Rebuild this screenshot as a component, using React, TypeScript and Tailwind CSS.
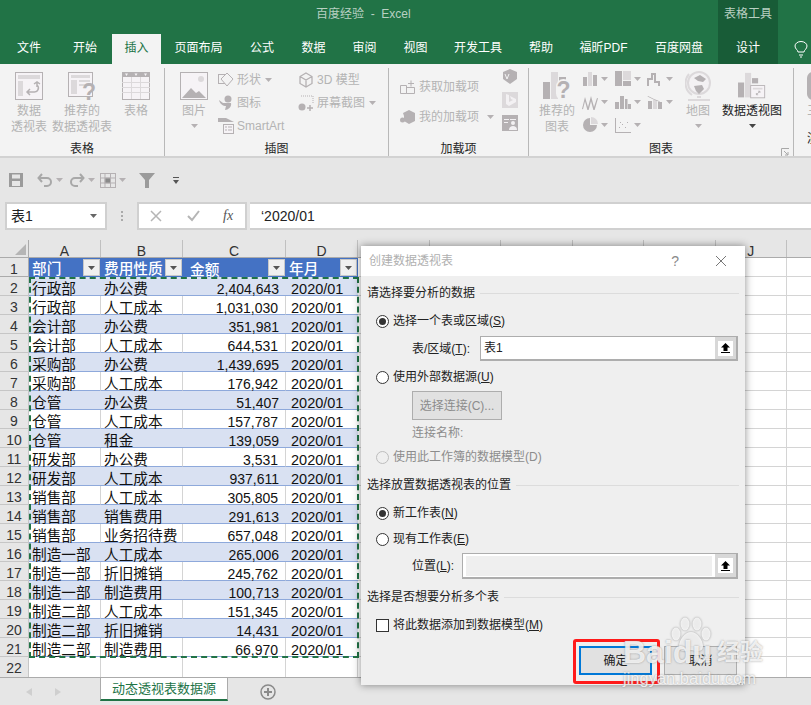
import React from 'react';

const G = '#b5b1b3';
const L = '#dcd9db';

const rows = [
  ['行政部', '办公费', '2,404,643'],
  ['行政部', '人工成本', '1,031,030'],
  ['会计部', '办公费', '351,981'],
  ['会计部', '人工成本', '644,531'],
  ['采购部', '办公费', '1,439,695'],
  ['采购部', '人工成本', '176,942'],
  ['仓管', '办公费', '51,407'],
  ['仓管', '人工成本', '157,787'],
  ['仓管', '租金', '139,059'],
  ['研发部', '办公费', '3,531'],
  ['研发部', '人工成本', '937,611'],
  ['销售部', '人工成本', '305,805'],
  ['销售部', '销售费用', '291,613'],
  ['销售部', '业务招待费', '657,048'],
  ['制造一部', '人工成本', '265,006'],
  ['制造一部', '折旧摊销', '245,762'],
  ['制造一部', '制造费用', '100,713'],
  ['制造二部', '人工成本', '151,345'],
  ['制造二部', '折旧摊销', '14,431'],
  ['制造二部', '制造费用', '66,970'],
];

const tabs: [string, string][] = [
  ['文件', 'w-[58px]'],
  ['开始', 'w-[54px]'],
  ['插入', 'w-[49px] bg-[#f3f3f3] text-[#217346]'],
  ['页面布局', 'w-[75px]'],
  ['公式', 'w-[52px]'],
  ['数据', 'w-[51px]'],
  ['审阅', 'w-[51px]'],
  ['视图', 'w-[51px]'],
  ['开发工具', 'w-[74px]'],
  ['帮助', 'w-[52px]'],
  ['福昕PDF', 'w-[73px]'],
  ['百度网盘', 'w-[78px]'],
  ['设计', 'w-[60px] bg-[#185c37]'],
];

const extraCols = ['E', 'F', 'G', 'H', 'I', 'J'];

function Caret({ color = '#b5b1b3' }: { color?: string }) {
  return (
    <svg width="7" height="4" viewBox="0 0 7 4" className="shrink-0">
      <path d="M0 0h7L3.500 4z" fill={color} />
    </svg>
  );
}

function Large({ icon, lines, width, caret, dark }: { icon: React.ReactNode; lines: string[]; width: string; caret?: boolean; dark?: boolean }) {
  return (
    <div className={`${width} flex flex-col items-center pt-2 shrink-0`}>
      <div className="h-7 w-7 flex items-center justify-center">{icon}</div>
      <div className={`mt-[3px] text-xs leading-4 text-center whitespace-nowrap ${dark ? 'text-[#222]' : 'text-[#b4b4b4]'}`}>
        {lines.map((l) => (
          <div key={l}>{l}</div>
        ))}
      </div>
      {caret && (
        <div className="mt-[5px]">
          <Caret color={dark ? '#444' : '#b5b1b3'} />
        </div>
      )}
    </div>
  );
}

function Small({ icon, label, caret }: { icon: React.ReactNode; label: string; caret?: boolean }) {
  return (
    <div className="h-[23px] flex items-center text-xs text-[#b4b4b4] whitespace-nowrap">
      <div className="w-[16px] h-[16px] mr-[3px] flex items-center justify-center">{icon}</div>
      <span>{label}</span>
      {caret && (
        <span className="ml-1">
          <Caret />
        </span>
      )}
    </div>
  );
}

function Group({ label, width, children }: { label: string; width: string; children: React.ReactNode }) {
  return (
    <div className={`${width} h-[90px] flex flex-col border-r border-[#b8b8b8] mt-[4px] shrink-0 relative`}>
      <div className="flex-1 flex -mt-[4px]">{children}</div>
      <div className="h-[17px] leading-[16px] text-xs text-center text-[#262626]">{label}</div>
    </div>
  );
}

const PivotIcon = (
  <svg width="28" height="28" viewBox="0 0 28 28" fill="none">
    <rect x=".5" y=".5" width="27" height="27" fill="#f6f3f6" stroke={G} />
    <path d="M3 3h22v4H3zM3 9h5v15H3z" fill={L} />
    <path d="M12 20h7a4 4 0 0 0 3-7M22 10v5M19 12l3-2 3 2M15 17l-3 3 3 3" stroke={G} strokeWidth="1.500" />
  </svg>
);
const RecommendIcon = (
  <svg width="28" height="28" viewBox="0 0 28 28" fill="none">
    <rect x=".5" y=".5" width="24" height="24" fill="#f6f3f6" stroke={G} />
    <path d="M3 3h19v3H3zM3 8h6v14H3zM11 8h11v2H11zM11 12h7v2H11z" fill={L} />
    <text x="14" y="28" fontSize="23" fontWeight="700" fill={G} fontFamily="Liberation Sans">?</text>
  </svg>
);
const TableIcon = (
  <svg width="28" height="28" viewBox="0 0 28 28" fill="none">
    <rect x=".5" y=".5" width="27" height="27" fill="#f6f3f6" stroke={G} />
    <path d="M0 0h28v5H0z" fill={G} />
    <path d="M0 10.500h28M0 15.500h28M0 20.500h28M9.500 5v22M18.500 5v22" stroke={L} />
    <path d="M3 1.500h3L4.500 4zM12.500 1.500h3L14 4zM22 1.500h3L23.500 4z" fill="#f6f3f6" />
  </svg>
);
const PictureIcon = (
  <svg width="28" height="28" viewBox="0 0 28 28" fill="none">
    <rect x=".5" y=".5" width="27" height="27" fill="#f6f3f6" stroke={G} />
    <circle cx="21" cy="7" r="3" fill={L} />
    <path d="M2 26l9-10 5 5 3-2 7 7z" fill={G} />
  </svg>
);
const ChartIcon = (
  <svg width="28" height="28" viewBox="0 0 28 28" fill="none">
    <path d="M0 10h7v17H0z" fill={G} />
    <path d="M8 0h7v27H8z" fill={L} />
    <path d="M16 5h7v4h-7z" fill={G} />
  </svg>
);
const RecommendChart = (
  <div className="relative w-7 h-7">
    {ChartIcon}
    <span className="absolute left-[13px] top-[7px] w-[15px] h-[22px] text-[23px] leading-[23px] font-bold text-[#b5b1b3] bg-[#f3f3f3] rounded-full text-center">?</span>
  </div>
);
const GlobeIcon = (
  <svg width="26" height="32" viewBox="0 0 26 32" fill="none">
    <circle cx="14" cy="13" r="11" fill="#f3f1f3" stroke={L} strokeWidth="2" />
    <path d="M9 8l6-3 6 4-3 3-5-1zM9 16l8-1 2 4-5 5-3-3z" fill={G} />
    <path d="M4 4a14 14 0 0 0 3 21" stroke={L} strokeWidth="2" />
    <path d="M12 26h4v2h-4zM3 29h22v2H3z" fill={L} />
  </svg>
);
const PivotChartIcon = (
  <svg width="32" height="30" viewBox="0 0 32 30" fill="none">
    <path d="M0 11h7v17H0z" fill={G} />
    <path d="M8 0h7v28H8z" fill={L} />
    <path d="M16 6h7v6h-7z" fill={G} />
    <rect x="14.500" y="14.500" width="16" height="14" fill="#f6f3f6" stroke={G} />
    <path d="M17 17h11v2H17z" fill={L} />
    <path d="M21 25l4-4M25 21h-2M25 21v2M21 25h2M21 25v-2" stroke={G} />
  </svg>
);

function Mini({ d, l }: { d: string; l?: string }) {
  return (
    <div className="h-[23px] flex items-center">
      <svg width="16" height="16" viewBox="0 0 16 16" className="shrink-0">
        {l && <path d={l} fill={L} />}
        <path d={d} fill={G} />
      </svg>
      <span className="ml-[3px]">
        <Caret />
      </span>
    </div>
  );
}

function Ribbon() {
  return (
    <div className="h-[94px] bg-[#f3f3f3] border-b-2 border-[#d2d2d2] flex overflow-hidden">
      <Group label="表格" width="w-[165px]">
        <div className="w-[10px]" />
        <Large width="w-[38px]" icon={PivotIcon} lines={['数据', '透视表']} />
        <div className="w-[3px]" />
        <Large width="w-[62px]" icon={RecommendIcon} lines={['推荐的', '数据透视表']} />
        <div className="w-[5px]" />
        <Large width="w-[36px]" icon={TableIcon} lines={['表格']} />
      </Group>
      <Group label="插图" width="w-[224px]">
        <div className="w-[14px]" />
        <Large width="w-[30px]" icon={PictureIcon} lines={['图片']} caret />
        <div className="w-[9px]" />
        <div className="w-[80px] pt-[4px]">
          <Small
            label="形状"
            caret
            icon={
              <svg width="16" height="16" viewBox="0 0 16 16" fill="none" stroke={G}>
                <rect x=".5" y="2.500" width="9" height="9" />
                <path d="M9 1l6 6-6 7-6-7z" fill="#f3f3f3" />
              </svg>
            }
          />
          <Small
            label="图标"
            icon={
              <svg width="16" height="16" viewBox="0 0 16 16" fill={G}>
                <circle cx="10" cy="4" r="3.500" />
                <path d="M1 5l4 3h8c1 4-3 7-6 7l1-4c-3 0-6-2-7-6z" />
              </svg>
            }
          />
          <Small
            label="SmartArt"
            icon={
              <svg width="16" height="16" viewBox="0 0 16 16" fill="none">
                <path d="M0 0h8l8 4H0z" fill={G} />
                <rect x="5.500" y="6.500" width="10" height="9" fill="#f6f3f6" stroke={G} />
                <path d="M7 9h2M7 12h2M10 9h4M10 12h4" stroke={G} />
              </svg>
            }
          />
        </div>
        <div className="pt-[4px]">
          <Small
            label="3D 模型"
            icon={
              <svg width="16" height="16" viewBox="0 0 16 16" fill="none" stroke={G} strokeWidth="1.300">
                <path d="M8 1l6 3.500v7L8 15l-6-3.500v-7zM2 4.500L8 8l6-3.500M8 8v7" />
              </svg>
            }
          />
          <Small
            label="屏幕截图"
            caret
            icon={
              <svg width="16" height="16" viewBox="0 0 16 16" fill="none">
                <path d="M3 1h12v8" stroke={G} strokeDasharray="1 1" />
                <circle cx="4" cy="12" r="3.500" fill={G} />
                <path d="M9 13h6M12 10v6" stroke={G} strokeWidth="1.500" />
              </svg>
            }
          />
        </div>
      </Group>
      <Group label="加载项" width="w-[140px]">
        <div className="w-[11px]" />
        <div className="w-[102px] pt-[8px]">
          <div className="h-[30px] flex items-center text-xs text-[#b4b4b4]">
            <svg width="16" height="16" viewBox="0 0 16 16" fill="none" stroke={G} className="mr-[3px]">
              <path d="M.5 6.500h6v8h-6zM6.500 8.500h8v6h-8zM8 4.500h6M11 1.500v6" />
            </svg>
            获取加载项
          </div>
          <div className="h-[30px] flex items-center text-xs text-[#b4b4b4]">
            <svg width="16" height="16" viewBox="0 0 16 16" fill={G} className="mr-[3px]">
              <path d="M9 1l6 3v8l-6 3-5-3V7l-1-3z" />
              <circle cx="2.500" cy="11" r="2.500" />
            </svg>
            我的加载项
            <span className="ml-2">
              <Caret />
            </span>
          </div>
        </div>
        <div className="flex flex-col pt-[5px]">
          <svg width="16" height="16" viewBox="0 0 16 16" className="mb-[7px]">
            <path d="M8 0l7 3v7l-7 5-7-5V3z" fill={G} />
            <path d="M3 5l2 5 2-5" stroke="#f3f3f3" fill="none" />
          </svg>
          <svg width="16" height="16" viewBox="0 0 16 16" className="mb-[7px]">
            <path d="M0 0h16v16H0z" fill={L} />
            <path d="M4 2l3 1v7l4-2-2-1-1-3 6 3v3l-7 4-3-2z" fill="#f3f1f3" />
          </svg>
          <svg width="16" height="16" viewBox="0 0 16 16">
            <path d="M0 0h16v16H0z" fill={G} />
            <path d="M2 4h5v1H2zM2 7h4v1H2zM8 4h6v1H8z" fill="#f3f1f3" />
            <circle cx="11" cy="8" r="2" fill="#f3f1f3" />
            <path d="M7 15c0-3 2-4 4-4s4 1 4 4z" fill="#f3f1f3" />
          </svg>
        </div>
      </Group>
      <Group label="图表" width="w-[265px]">
        <div className="w-[3px] shrink-0" />
        <Large width="w-[50px]" icon={RecommendChart} lines={['推荐的', '图表']} />
        <div className="w-[98px] pt-[3px] grid grid-cols-3 content-start shrink-0">
          <Mini d="M1 6h4v9H1zM11 4h4v11h-4z" l="M6 1h4v14H6z" />
          <Mini d="M0 0h7v15H0zM8 10h8v5H8z" l="M8 0h8v9H8z" />
          <Mini d="M0 15V7h4V2h5v8h4v5h-2v-3H7V4H6v5H2v6z" />
          <Mini d="M0 15L3 3l3 10 3-11 3 11 3-9 1 .3-4 14-3-11-3 11-3-11-2 8z" />
          <Mini d="M0 8h4v7H0zM5 2h4v13H5zM10 5h2.500v10H10zM13 10h3v5h-3z" />
          <Mini d="M1 7h4v8H1zM11 8h4v7h-4zM1 2l6 3 5 2 3 3-.5.5-3-3-5-2-6-3z" l="M6 6h4v9H6z" />
          <Mini d="M8 1a7 7 0 1 0 7 7H8z" l="M9 0a7 7 0 0 1 7 7H9z" />
          <Mini d="M0 1h1v14h15v1H0zM4 10h1v1H4zM7 7h1v1H7zM10 10h1v1h-1zM12 5h1v1h-1zM5 5h1v1H5z" />
        </div>
        <Large width="w-[36px]" icon={GlobeIcon} lines={['地图']} caret />
        <div className="w-[5px] shrink-0" />
        <Large width="w-[62px]" icon={PivotChartIcon} lines={['数据透视图']} caret dark />
        <svg width="9" height="9" viewBox="0 0 9 9" fill="none" stroke="#a8a8a8" className="absolute right-[3px] bottom-[1px]">
          <path d="M.5 8V.5H8M3 3l4 4M7 4v3H4" />
        </svg>
      </Group>
      <div className="pl-[13px] pt-[8px] text-xs">
        <div className="w-[20px] h-[28px] bg-[#b5b1b3] rounded-l-md" />
        <div className="mt-[3px] leading-4 text-[#b4b4b4]">三</div>
        <div className="mt-[12px] leading-4 text-[#262626]">演</div>
      </div>
    </div>
  );
}

function Radio({ checked, off }: { checked?: boolean; off?: boolean }) {
  return (
    <span className={`w-[13px] h-[13px] rounded-full border flex items-center justify-center shrink-0 ${off ? 'border-[#bdbdbd]' : 'border-[#333] bg-white'}`}>
      {checked && <span className="w-[7px] h-[7px] rounded-full bg-[#333]" />}
    </span>
  );
}

function Section({ label, top }: { label: string; top: string }) {
  return (
    <div className={`${top} h-5 flex items-center gap-[5px] pr-[6px]`}>
      <span className="whitespace-nowrap">{label}</span>
      <span className="flex-1 h-px bg-[#dcdcdc]" />
    </div>
  );
}

function Picker() {
  return (
    <div className="w-[21px] self-stretch bg-[#d8d8d8] flex items-center justify-center shrink-0">
      <div className="w-[15px] h-[15px] bg-white flex items-center justify-center">
        <svg width="9" height="10" viewBox="0 0 9 10">
          <path d="M4.500 0L9 4.500H6.500V8h-4V4.500H0zM0 9h9v1H0z" fill="#000" />
        </svg>
      </div>
    </div>
  );
}

function Dialog() {
  return (
    <div className="absolute left-[361px] top-[246px] w-[384px] h-[439px] bg-[#efefef] shadow-[0_0_8px_rgba(0,0,0,0.45)] text-xs text-[#222] flex flex-col">
      <div className="h-[30px] bg-white flex items-center pl-2 text-[#b0b0b0] shrink-0">
        <span className="flex-1">创建数据透视表</span>
        <span className="text-[#8a8a8a] text-sm mr-[36px]">?</span>
        <svg width="12" height="12" viewBox="0 0 12 12" className="mr-[18px]" stroke="#777" fill="none">
          <path d="M1 1l10 10M11 1L1 11" />
        </svg>
      </div>
      <div className="flex-1 pl-[6px] relative">
        <Section label="请选择要分析的数据" top="mt-[7px]" />
        <div className="mt-2 h-5 pl-[9px] flex items-center gap-[4px]">
          <Radio checked />
          <span>
            选择一个表或区域(<span className="underline">S</span>)
          </span>
        </div>
        <div className="mt-[5px] h-[25px] flex items-center pl-[45px] pr-[7px]">
          <span className="w-[68px] whitespace-nowrap">
            表/区域(<span className="underline">T</span>):
          </span>
          <div className="flex-1 h-full border-2 border-[#adadad] border-l border-t flex items-center bg-white">
            <span className="flex-1 pl-[3px]">表1</span>
            <Picker />
          </div>
        </div>
        <div className="mt-[6px] h-5 pl-[9px] flex items-center gap-[4px]">
          <Radio />
          <span>
            使用外部数据源(<span className="underline">U</span>)
          </span>
        </div>
        <div className="mt-1 ml-[45px] w-[90px] h-[29px] bg-[#e1e1e1] border border-[#adadad] text-[#8c8c8c] flex items-center justify-center">
          选择连接(C)...
        </div>
        <div className="mt-[3px] h-5 pl-[45px] flex items-center text-[#8c8c8c]">连接名称:</div>
        <div className="mt-1 h-5 pl-[9px] flex items-center gap-[4px] text-[#8c8c8c]">
          <Radio off />
          <span>使用此工作簿的数据模型(D)</span>
        </div>
        <Section label="选择放置数据透视表的位置" top="mt-2" />
        <div className="mt-2 h-5 pl-[9px] flex items-center gap-[4px]">
          <Radio checked />
          <span>
            新工作表(<span className="underline">N</span>)
          </span>
        </div>
        <div className="mt-[6px] h-5 pl-[9px] flex items-center gap-[4px]">
          <Radio />
          <span>
            现有工作表(<span className="underline">E</span>)
          </span>
        </div>
        <div className="mt-1 h-[26px] flex items-center pl-[45px] pr-[7px]">
          <span className="w-[50px] whitespace-nowrap">
            位置(<span className="underline">L</span>):
          </span>
          <div className="flex-1 h-full border-2 border-[#adadad] border-l border-t flex items-center bg-white">
            <span className="flex-1 h-[20px] mx-[3px] bg-[#efefef]" />
            <Picker />
          </div>
        </div>
        <Section label="选择是否想要分析多个表" top="mt-2" />
        <div className="mt-2 h-5 pl-[9px] flex items-center gap-[4px]">
          <span className="w-[13px] h-[13px] border border-[#333] bg-white shrink-0" />
          <span>
            将此数据添加到数据模型(<span className="underline">M</span>)
          </span>
        </div>
        <div className="mt-[11px] h-[29px] flex pl-[212px] gap-[12px]">
          <div className="w-[73px] bg-[#e1e1e1] border-2 border-[#0078d7] flex items-center justify-center">确定</div>
          <div className="w-[73px] bg-[#e1e1e1] border border-[#adadad] flex items-center justify-center">取消</div>
        </div>
        <svg width="9" height="9" viewBox="0 0 9 9" className="absolute right-0 bottom-0" fill="#999">
          <path d="M7 1h1.500v1.500H7zM4 4h1.500v1.500H4zM7 4h1.500v1.500H7zM1 7h1.500v1.500H1zM4 7h1.500v1.500H4zM7 7h1.500v1.500H7z" />
        </svg>
      </div>
    </div>
  );
}

function FilterBtn() {
  return (
    <span className="absolute right-[1px] top-[1px] w-[17px] h-[17px] bg-[#f0f0f0] border border-[#c8c8c8] flex items-center justify-center">
      <Caret color="#555" />
    </span>
  );
}

function HeaderCell({ w, label, pad }: { w: string; label: string; pad?: string }) {
  return (
    <div className={`${w} relative h-[19px] text-white font-medium text-[14.67px] shrink-0 ${pad || 'pl-[3px] leading-[23px]'}`}>
      {label}
      <FilterBtn />
    </div>
  );
}

function RightCells({ height }: { height: string }) {
  return (
    <>
      {extraCols.map((c) => (
        <div key={c} className={`w-[71.500px] ${height} border-r border-b border-[#d4d4d4] shrink-0`} />
      ))}
      <div className={`flex-1 ${height} border-b border-[#d4d4d4]`} />
    </>
  );
}

function Sheet() {
  return (
    <div className="relative bg-white text-[14.67px] text-[#111]">
      <div className="h-[18px] bg-[#e6e6e6] flex border-b border-[#ababab] text-[#333] text-sm leading-[22px] text-center">
        <div className="w-[29px] border-r border-[#ababab] relative">
          <svg width="11" height="11" viewBox="0 0 11 11" className="absolute right-[2px] bottom-[2px]">
            <path d="M11 0v11H0z" fill="#b5b5b5" />
          </svg>
        </div>
        {[
          ['A', 'w-[72px]'],
          ['B', 'w-[82px]'],
          ['C', 'w-[103px]'],
          ['D', 'w-[72px]'],
          ['E', 'w-[71.500px]'],
          ['F', 'w-[71.500px]'],
          ['G', 'w-[71.500px]'],
          ['H', 'w-[71.500px]'],
          ['I', 'w-[71.500px]'],
          ['J', 'w-[71.500px]'],
        ].map(([c, w]) => (
          <div key={c} className={`${w} border-r border-[#c0c0c0]`}>
            {c}
          </div>
        ))}
      </div>
      <div className="flex h-[19px]">
        <div className="w-[29px] bg-[#e6e6e6] border-r border-b border-[#ababab] text-center text-sm leading-[22px] text-[#333] shrink-0">1</div>
        <HeaderCell w="w-[72px] bg-[#4472c4]" label="部门" />
        <HeaderCell w="w-[82px] bg-[#4472c4]" label="费用性质" />
        <HeaderCell w="w-[103px] bg-[#4472c4]" label="金额" pad="pl-[7px] leading-[25px]" />
        <HeaderCell w="w-[72px] bg-[#4472c4]" label="年月" />
        <RightCells height="h-[19px]" />
      </div>
      {rows.map((r, i) => (
        <div key={i} className="flex h-[19px]">
          <div className="w-[29px] bg-[#e6e6e6] border-r border-b border-[#c6c6c6] text-center text-sm leading-[23px] text-[#333] shrink-0">{i + 2}</div>
          <div className={`w-[72px] pl-[3px] leading-[24px] border-b border-[#8ea9db] shrink-0 whitespace-nowrap ${i % 2 === 0 ? 'bg-[#d9e1f2]' : 'bg-white border-r border-r-[#d4d4d4]'}`}>{r[0]}</div>
          <div className={`w-[82px] pl-[3px] leading-[24px] border-b border-[#8ea9db] shrink-0 whitespace-nowrap ${i % 2 === 0 ? 'bg-[#d9e1f2]' : 'bg-white border-r border-r-[#d4d4d4]'}`}>{r[1]}</div>
          <div className={`w-[103px] pr-[7px] text-right text-sm leading-[24px] border-b border-[#8ea9db] shrink-0 ${i % 2 === 0 ? 'bg-[#d9e1f2]' : 'bg-white border-r border-r-[#d4d4d4]'}`}>{r[2]}</div>
          <div className={`w-[72px] pl-[5px] text-[14.5px] leading-[24px] border-b border-[#8ea9db] shrink-0 ${i % 2 === 0 ? 'bg-[#d9e1f2]' : 'bg-white'}`}>2020/01</div>
          <RightCells height="h-[19px]" />
        </div>
      ))}
      <div className="flex h-[21px]">
        <div className="w-[29px] bg-[#e6e6e6] border-r border-[#c6c6c6] text-center text-sm leading-[23px] text-[#333] shrink-0">22</div>
        {['w-[72px]', 'w-[82px]', 'w-[103px]', 'w-[72px]'].map((w) => (
          <div key={w} className={`${w} border-r border-b border-[#d4d4d4] shrink-0`} />
        ))}
        <RightCells height="h-[21px]" />
      </div>
      <div className="absolute left-[29px] top-[37px] w-[330px] h-[381px] border-2 border-dashed border-[#217346] pointer-events-none" />
    </div>
  );
}

function Watermark() {
  return (
    <div className="absolute left-[620px] top-[612px] w-[150px] h-[78px] text-white/80 font-bold [text-shadow:0_0_2px_rgba(110,110,110,0.7)] pointer-events-none">
      <svg width="40" height="36" viewBox="0 0 40 36" className="absolute left-[51px] top-[5px] drop-shadow-[0_0_1px_rgba(110,110,110,0.8)]" fill="#ffffff" fillOpacity=".8">
        <ellipse cx="5" cy="17" rx="4.500" ry="6.500" />
        <ellipse cx="14" cy="7" rx="4.500" ry="6.500" />
        <ellipse cx="26" cy="7" rx="4.500" ry="6.500" />
        <ellipse cx="35" cy="17" rx="4.500" ry="6.500" />
        <path d="M20 15c-6 0-12 8-12 14 0 7 7 5 12 4 5 1 12 3 12-4 0-6-6-14-12-14z" />
      </svg>
      <span className="absolute left-[3px] top-[22px] text-[32px] leading-9">Baidu</span>
      <span className="absolute left-[97px] top-[24px] text-[23px] leading-8">经验</span>
      <span className="absolute left-[3px] top-[56px] text-[16.500px] leading-5 font-normal whitespace-nowrap">jingyan.baidu.com</span>
    </div>
  );
}

export default function App() {
  return (
    <div className="relative w-[811px] h-[705px] overflow-hidden bg-[#e6e6e6] font-['Liberation_Sans','Noto_Sans_CJK_SC',sans-serif]">
      <div className="h-[34px] bg-[#217346] flex text-xs text-[#b8d0c2]">
        <div className="w-[718px] pl-[316px] leading-[29px] whitespace-pre">百度经验  -  Excel</div>
        <div className="w-[60px] bg-[#185c37] text-center leading-[29px]">表格工具</div>
      </div>
      <div className="h-[30px] bg-[#217346] flex text-xs text-white">
        {tabs.map(([t, c]) => (
          <div key={t} className={`${c} text-center leading-[28px] shrink-0`}>
            {t}
          </div>
        ))}
        <div className="ml-[16px] pt-[7px]">
          <svg width="14" height="17" viewBox="0 0 14 17" fill="none" stroke="#fff">
            <path d="M4 11c0-2-3-3-3-6a6 4.500 0 0 1 12 0c0 3-3 4-3 6zM5 14h4M6 16h2" />
          </svg>
        </div>
      </div>
      <Ribbon />
      <div className="h-[44px] flex items-center">
        <svg width="16" height="16" viewBox="0 0 16 16" className="ml-[8px]" fill="#9b9b9b">
          <path d="M1 1h14v14H1zM4 2.500v4h8v-4zM4 9v5h8V9z" fillRule="evenodd" />
        </svg>
        <svg width="16" height="14" viewBox="0 0 16 14" className="ml-[13px]" fill="none" stroke="#a8a8a8" strokeWidth="2">
          <path d="M5 1L1.500 5 5 9M2 5h8a4 4 0 0 1 0 8H7" />
        </svg>
        <span className="ml-[3px]"><Caret /></span>
        <svg width="16" height="14" viewBox="0 0 16 14" className="ml-[6px]" fill="none" stroke="#a8a8a8" strokeWidth="2">
          <path d="M11 1l3.500 4L11 9M14 5H6a4 4 0 0 0 0 8h3" />
        </svg>
        <span className="ml-[3px]"><Caret /></span>
        <svg width="16" height="15" viewBox="0 0 16 15" className="ml-[5px]" fill="none" stroke="#b5b1b3">
          <rect x=".5" y=".5" width="15" height="14" />
          <path d="M.5 5h15M.5 10h15M5 .5v14M10.500 .5v14" />
          <rect x="5" y="5" width="5.500" height="5" fill="#8a8a8a" />
        </svg>
        <span className="ml-[3px]"><Caret /></span>
        <svg width="16" height="15" viewBox="0 0 16 15" className="ml-[13px]" fill="#9b9b9b">
          <path d="M0 0h16l-6 7v8H6V7z" />
        </svg>
        <svg width="6" height="7" viewBox="0 0 6 7" className="ml-[18px]" fill="#555">
          <path d="M0 0h6v1H0zM0 3h6L3 7z" />
        </svg>
      </div>
      <div className="h-[28px] flex text-sm text-[#222]">
        <div className="ml-[5px] w-[102px] bg-white border-2 border-[#d0d0d0] flex items-center pl-[4px] pr-[8px]">
          <span className="flex-1">表1</span>
          <Caret color="#666" />
        </div>
        <div className="w-[30px] flex flex-col items-center justify-center gap-[2px]">
          <span className="w-[2px] h-[2px] bg-[#aaa]" />
          <span className="w-[2px] h-[2px] bg-[#aaa]" />
          <span className="w-[2px] h-[2px] bg-[#aaa]" />
        </div>
        <div className="w-[110px] bg-white border-2 border-[#d0d0d0] flex items-center pl-[11px]">
          <svg width="12" height="12" viewBox="0 0 12 12" fill="none" stroke="#b5b5b5" strokeWidth="1.500">
            <path d="M1 1l10 10M11 1L1 11" />
          </svg>
          <svg width="13" height="12" viewBox="0 0 13 12" className="ml-[25px]" fill="none" stroke="#b5b5b5" strokeWidth="2">
            <path d="M1 6l4 4 7-9" />
          </svg>
          <span className="ml-[23px] font-['Liberation_Serif'] italic text-[#555]">fx</span>
        </div>
        <div className="ml-[3px] flex-1 bg-white border-y-2 border-[#d0d0d0] pl-[11px] leading-[24px]">‘2020/01</div>
      </div>
      <div className="h-[10px]" />
      <Sheet />
      <div className="h-[27px] bg-[#e6e6e6] border-t border-[#ababab] flex -mt-[1px] relative">
        <svg width="6" height="8" viewBox="0 0 6 8" className="absolute left-[26px] top-[10px]" fill="#cfcfcf">
          <path d="M6 0v8L0 4z" />
        </svg>
        <svg width="6" height="8" viewBox="0 0 6 8" className="absolute left-[55px] top-[10px]" fill="#cfcfcf">
          <path d="M0 0v8l6-4z" />
        </svg>
        <div className="ml-[100px] w-[128px] h-[24px] -mt-px bg-white border-x border-t border-[#ababab] border-b-2 border-b-[#217346] text-[13px] leading-[22px] text-[#217346] text-center">
          动态透视表数据源
        </div>
        <svg width="16" height="16" viewBox="0 0 16 16" className="ml-[32px] mt-[6px]" fill="none" stroke="#8a8a8a">
          <circle cx="8" cy="8" r="7" strokeWidth="1.500" />
          <path d="M4 8h8M8 4v8" strokeWidth="2" />
        </svg>
      </div>
      <Dialog />
      <div className="absolute left-[573px] top-[639px] w-[87px] h-[45px] border-[3px] border-[#ff1a1a] rounded-[3px]" />
      <Watermark />
    </div>
  );
}
